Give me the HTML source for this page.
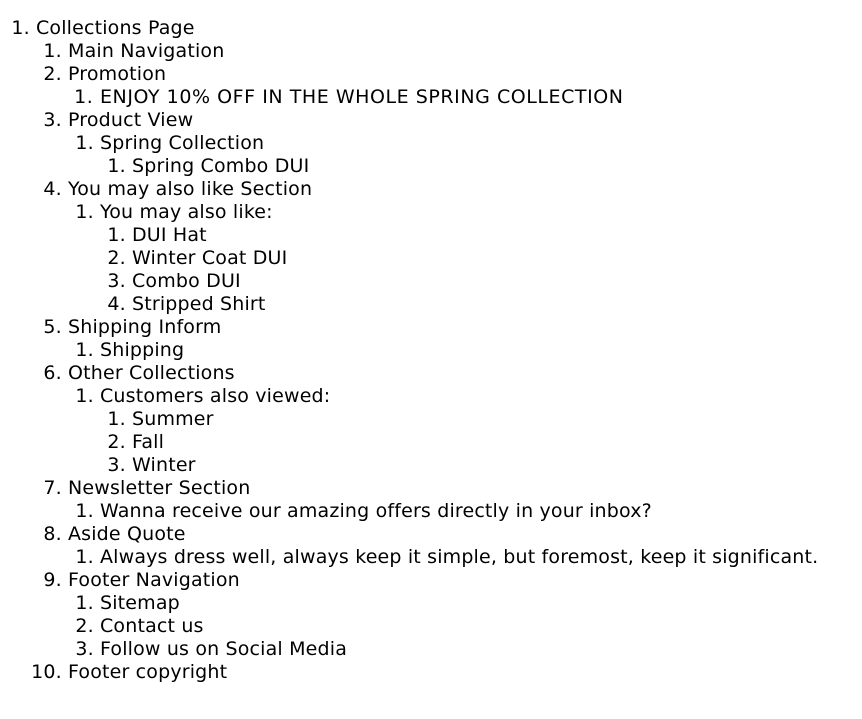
<!DOCTYPE html>
<html><head><meta charset="utf-8"><style>
body{margin:0;background:#fff;color:#000;font-family:"DejaVu Sans","Liberation Sans",sans-serif;font-size:19px;line-height:23px;letter-spacing:0.17px;}
ol{margin:0;padding-left:32px;}
body>ol{margin-top:17px;padding-left:36px;}
li{white-space:nowrap;}
.caps{letter-spacing:0.55px;}
</style></head><body>
<ol>
<li>Collections Page
<ol>
<li>Main Navigation</li>
<li>Promotion<ol><li class="caps">ENJOY 10% OFF IN THE WHOLE SPRING COLLECTION</li></ol></li>
<li>Product View<ol><li>Spring Collection<ol><li>Spring Combo DUI</li></ol></li></ol></li>
<li>You may also like Section<ol><li>You may also like:<ol><li>DUI Hat</li><li>Winter Coat DUI</li><li>Combo DUI</li><li>Stripped Shirt</li></ol></li></ol></li>
<li>Shipping Inform<ol><li>Shipping</li></ol></li>
<li>Other Collections<ol><li>Customers also viewed:<ol><li>Summer</li><li>Fall</li><li>Winter</li></ol></li></ol></li>
<li>Newsletter Section<ol><li>Wanna receive our amazing offers directly in your inbox?</li></ol></li>
<li>Aside Quote<ol><li>Always dress well, always keep it simple, but foremost, keep it significant.</li></ol></li>
<li>Footer Navigation<ol><li>Sitemap</li><li>Contact us</li><li>Follow us on Social Media</li></ol></li>
<li>Footer copyright</li>
</ol>
</li>
</ol>
</body></html>
